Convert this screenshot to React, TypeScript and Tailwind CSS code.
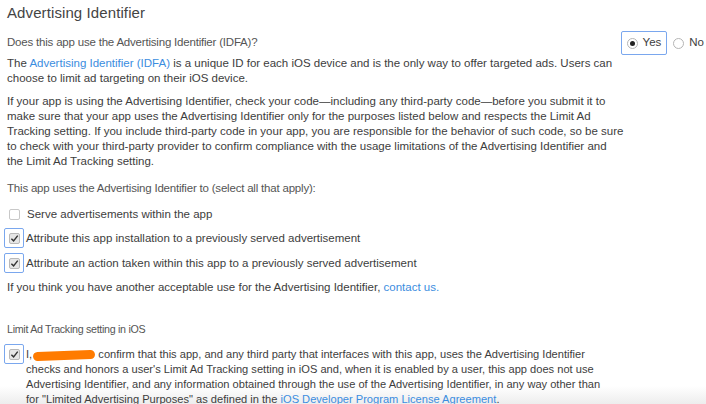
import React from 'react';

const link = 'text-[#3b8de0]';
const label = 'text-[11.5px] tracking-[-0.2px] text-[#555]';

function Check({ on, boxed }: { on?: boolean; boxed?: boolean }) {
  return (
    <div
      className={
        'w-5 h-5 flex items-center justify-center shrink-0 ' +
        (boxed ? 'border-[1.5px] border-[#7aa7ee] rounded-[2px]' : '')
      }
    >
      <div
        className={
          'w-[11px] h-[11px] rounded-[2px] border flex items-center justify-center ' +
          (on ? 'border-[#b9b9b9] bg-[#e6e6e6]' : 'border-[#c8c8c8] bg-white')
        }
      >
        {on && (
          <svg width="9" height="9" viewBox="0 0 10 10">
            <path d="M1.5 5.2 L4 7.6 L8.6 1.8" fill="none" stroke="#333" strokeWidth="1.6" />
          </svg>
        )}
      </div>
    </div>
  );
}

function Radio({ on }: { on?: boolean }) {
  return (
    <span className="w-[11px] h-[11px] rounded-full border border-[#b5b5b5] bg-white flex items-center justify-center">
      {on && <span className="w-[5px] h-[5px] rounded-full bg-[#222]" />}
    </span>
  );
}

export default function App() {
  return (
    <div
      className="relative w-[706px] h-[404px] overflow-hidden bg-[linear-gradient(to_bottom,#ffffff_386px,#ededed_404px)] text-[#3d3d3d] px-[7px]"
      style={{ fontFamily: '"Liberation Sans", Arial, sans-serif' }}
    >
      <h1 className="text-[15px] leading-[20px] mt-[3px] text-[#444] tracking-[0.1px]">Advertising Identifier</h1>

      <div className="flex items-center justify-between mt-[8px] h-6">
        <span className={label}>Does this app use the Advertising Identifier (IDFA)?</span>
        <div className="flex items-center text-[11.5px] -mr-[5px]">
          <div className="flex items-center gap-[5px] border-[1.5px] border-[#7aa7ee] rounded-[2px] h-6 px-[5px] mr-[6px]">
            <Radio on />
            <span>Yes</span>
          </div>
          <div className="flex items-center gap-[5px]">
            <Radio />
            <span>No</span>
          </div>
        </div>
      </div>

      <div className="text-[11.5px] leading-[15px]">
        <p className="mt-[1px]">
          The <span className={link}>Advertising Identifier (IDFA)</span> is a unique ID for each iOS device and is the only way to offer targeted ads. Users can
          <br />
          choose to limit ad targeting on their iOS device.
        </p>
        <p className="mt-[8px]">
          If your app is using the Advertising Identifier, check your code—including any third-party code—before you submit it to
          <br />
          make sure that your app uses the Advertising Identifier only for the purposes listed below and respects the Limit Ad
          <br />
          Tracking setting. If you include third-party code in your app, you are responsible for the behavior of such code, so be sure
          <br />
          to check with your third-party provider to confirm compliance with the usage limitations of the Advertising Identifier and
          <br />
          the Limit Ad Tracking setting.
        </p>

        <p className={'mt-[12px] ' + label}>This app uses the Advertising Identifier to (select all that apply):</p>

        <div className="mt-[6px] flex flex-col">
          <div className="flex items-center h-6 -ml-[3px] gap-[2px]">
            <Check />
            <span className="ml-px">Serve advertisements within the app</span>
          </div>
          <div className="flex items-center h-6 -ml-[3px] gap-[2px]">
            <Check on boxed />
            <span>Attribute this app installation to a previously served advertisement</span>
          </div>
          <div className="flex items-center h-6 mt-px -ml-[3px] gap-[2px]">
            <Check on boxed />
            <span>Attribute an action taken within this app to a previously served advertisement</span>
          </div>
        </div>

        <p className="mt-[5px]">
          If you think you have another acceptable use for the Advertising Identifier, <span className={link}>contact us.</span>
        </p>

        <p className="mt-[27px] text-[10.7px] tracking-[-0.3px] text-[#555]">Limit Ad Tracking setting in iOS</p>

        <div className="flex items-start mt-[10px] -ml-[3px] gap-[2px]">
          <div className="-mt-[3px]">
            <Check on boxed />
          </div>
          <p className="text-[11.1px]">
            I,{' '}
            <span className="inline-block align-middle w-[62px] h-[9px] rounded-full bg-[#ff7b00] -rotate-2 -ml-[2px]" /> confirm that this
            app, and any third party that interfaces with this app, uses the Advertising Identifier
            <br />
            checks and honors a user's Limit Ad Tracking setting in iOS and, when it is enabled by a user, this app does not use
            <br />
            Advertising Identifier, and any information obtained through the use of the Advertising Identifier, in any way other than
            <br />
            for "Limited Advertising Purposes" as defined in the <span className={link}>iOS Developer Program License Agreement</span>.
          </p>
        </div>
      </div>
    </div>
  );
}
